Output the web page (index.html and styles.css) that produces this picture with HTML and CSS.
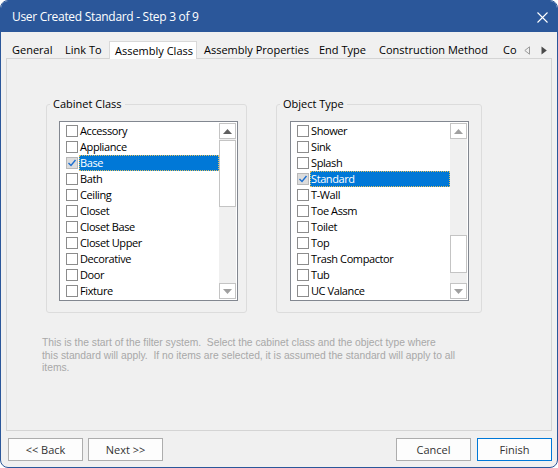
FILE: index.html
```html
<!DOCTYPE html>
<html>
<head>
<meta charset="utf-8">
<link rel="stylesheet" href="styles.css">
</head>
<body>
<div class="window">
  <div class="titlebar">
    <span class="title">User Created Standard - Step 3 of 9</span>
    <svg class="close" width="11" height="11" viewBox="0 0 11 11"><path d="M0.5 0.5 L10.5 10.5 M10.5 0.5 L0.5 10.5" stroke="#fff" stroke-width="1.1" fill="none"/></svg>
  </div>
  <div class="body">
    <div class="tabs">
      <span class="tab t-general">General</span>
      <span class="tab t-link">Link To</span>
      <span class="tab t-class active">Assembly Class</span>
      <span class="tab t-props">Assembly Properties</span>
      <span class="tab t-end">End Type</span>
      <span class="tab t-cons">Construction Method</span>
      <span class="tab t-co">Co</span>
      <span class="tab-arrows">
        <svg width="6" height="9" viewBox="0 0 6 9"><path d="M5.5 0.8 L0.8 4.5 L5.5 8.2 Z" fill="none" stroke="#9a9a9a" stroke-width="1"/></svg>
        <svg width="6" height="9" viewBox="0 0 6 9"><path d="M0.5 0.5 L5.8 4.5 L0.5 8.5 Z" fill="#4a4a4a"/></svg>
      </span>
    </div>
    <div class="panel">
      <div class="groups">
        <fieldset class="group group-left">
          <legend>Cabinet Class</legend>
          <div class="listbox">
            <div class="items">
              <div class="row"><span class="cb"></span><span class="lbl">Accessory</span></div>
              <div class="row"><span class="cb"></span><span class="lbl">Appliance</span></div>
              <div class="row"><span class="cb checked"><svg width="10" height="10" viewBox="0 0 10 10"><path d="M1.5 5 L4 7.5 L8.5 2" stroke="#1c6fd0" stroke-width="1.4" fill="none"/></svg></span><span class="lbl selected">Base</span></div>
              <div class="row"><span class="cb"></span><span class="lbl">Bath</span></div>
              <div class="row"><span class="cb"></span><span class="lbl">Ceiling</span></div>
              <div class="row"><span class="cb"></span><span class="lbl">Closet</span></div>
              <div class="row"><span class="cb"></span><span class="lbl">Closet Base</span></div>
              <div class="row"><span class="cb"></span><span class="lbl">Closet Upper</span></div>
              <div class="row"><span class="cb"></span><span class="lbl">Decorative</span></div>
              <div class="row"><span class="cb"></span><span class="lbl">Door</span></div>
              <div class="row"><span class="cb"></span><span class="lbl">Fixture</span></div>
            </div>
            <div class="scrollbar">
              <div class="sbtn"><svg width="9" height="5" viewBox="0 0 9 5"><path d="M0 5 L4.5 0 L9 5 Z" fill="#606060"/></svg></div>
              <div class="track track-left"><div class="thumb"></div></div>
              <div class="sbtn"><svg width="9" height="5" viewBox="0 0 9 5"><path d="M0 0 L4.5 5 L9 0 Z" fill="#a0a0a0"/></svg></div>
            </div>
          </div>
        </fieldset>
        <fieldset class="group group-right">
          <legend>Object Type</legend>
          <div class="listbox">
            <div class="items">
              <div class="row"><span class="cb"></span><span class="lbl">Shower</span></div>
              <div class="row"><span class="cb"></span><span class="lbl">Sink</span></div>
              <div class="row"><span class="cb"></span><span class="lbl">Splash</span></div>
              <div class="row"><span class="cb checked"><svg width="10" height="10" viewBox="0 0 10 10"><path d="M1.5 5 L4 7.5 L8.5 2" stroke="#1c6fd0" stroke-width="1.4" fill="none"/></svg></span><span class="lbl selected">Standard</span></div>
              <div class="row"><span class="cb"></span><span class="lbl">T-Wall</span></div>
              <div class="row"><span class="cb"></span><span class="lbl">Toe Assm</span></div>
              <div class="row"><span class="cb"></span><span class="lbl">Toilet</span></div>
              <div class="row"><span class="cb"></span><span class="lbl">Top</span></div>
              <div class="row"><span class="cb"></span><span class="lbl">Trash Compactor</span></div>
              <div class="row"><span class="cb"></span><span class="lbl">Tub</span></div>
              <div class="row"><span class="cb"></span><span class="lbl">UC Valance</span></div>
            </div>
            <div class="scrollbar">
              <div class="sbtn"><svg width="9" height="5" viewBox="0 0 9 5"><path d="M0 5 L4.5 0 L9 5 Z" fill="#a0a0a0"/></svg></div>
              <div class="track track-right"><div class="thumb"></div></div>
              <div class="sbtn"><svg width="9" height="5" viewBox="0 0 9 5"><path d="M0 0 L4.5 5 L9 0 Z" fill="#a0a0a0"/></svg></div>
            </div>
          </div>
        </fieldset>
      </div>
      <p class="desc">This is the start of the filter system.&nbsp; Select the cabinet class and the object type where<br>this standard will apply.&nbsp; If no items are selected, it is assumed the standard will apply to all<br>items.</p>
    </div>
    <div class="buttons">
      <div class="btn-group">
        <button class="btn">&lt;&lt; Back</button>
        <button class="btn">Next &gt;&gt;</button>
      </div>
      <div class="btn-group right">
        <button class="btn">Cancel</button>
        <button class="btn primary">Finish</button>
      </div>
    </div>
  </div>
</div>
</body>
</html>
```
FILE: styles.css
```css
* { box-sizing: border-box; }
html, body { margin: 0; padding: 0; background: #ffffff; }
body { width: 558px; height: 468px; font-family: "Open Sans", "Noto Sans", sans-serif; font-size: 11px; color: #000; }

.window {
  width: 558px; height: 468px;
  border: 1px solid #2b579a;
  border-radius: 8px;
  overflow: hidden;
  background: #f0f0f0;
  display: flex; flex-direction: column;
}
.titlebar {
  height: 31px; flex: none;
  background: #2b579a;
  display: flex; align-items: center; justify-content: space-between;
  padding: 0 9px 0 11px;
}
.title { color: #fff; font-size: 12px; line-height: 16px; letter-spacing: -0.3px; }
.close { display: block; margin-top: 1px; }

.body { flex: 1; padding: 0 5px; display: flex; flex-direction: column; }

.tabs {
  margin-top: 9px; height: 17px;
  display: flex; align-items: stretch;
  position: relative; z-index: 1;
}
.tab { line-height: 17px; white-space: nowrap; color: #000; }
.t-general { margin-left: 6px; width: 53px; }
.t-link { width: 44px; }
.t-class { width: 88px; }
.t-props { margin-left: 7px; width: 115px; }
.t-end { width: 60px; }
.t-cons { width: 124px; }
.t-co { width: 20px; }
.tab.active {
  background: #fff;
  border: 1px solid #d9d9d9; border-bottom: none;
  height: 18px; padding-left: 5px;
  line-height: 18px;
}
.tab-arrows { display: flex; align-items: center; gap: 11px; margin-left: 1px; padding-top: 1px; }
.tab-arrows svg { display: block; }

.panel {
  height: 373px; flex: none;
  border: 1px solid #d4d4d4;
  background: #f0f0f0;
  display: flex; flex-direction: column;
}
.groups { display: flex; margin-top: 38px; margin-left: 39px; }
.group {
  margin: 0; padding: 0 0 11px 12px;
  border: 1px solid #dcdcdc; border-radius: 3px;
  height: 216px;
}
.group-left { width: 201px; }
.group-left legend { margin-left: -9px; }
.group-right { width: 206px; margin-left: 29px; padding-left: 13px; }
.group-right legend { margin-left: -10px; }
legend { padding: 0 3px; line-height: 14px; color: #000; }

.listbox {
  margin-top: 10px;
  width: 179px; height: 180px;
  border: 1px solid #828790;
  background: #fff;
  padding: 1px;
  display: flex;
}
.items { width: 158px; }
.row { height: 16px; display: flex; align-items: center; padding-left: 5px; }
.cb {
  width: 12px; height: 12px; flex: none;
  border: 1px solid #8c8c8c; background: #fff;
  margin-right: 1px;
  display: flex; align-items: center; justify-content: center;
}
.cb.checked { background: #dcdcdc; border-color: #b8b8b8; }
.cb svg { display: block; }
.lbl { flex: 1; height: 16px; line-height: 16px; padding-left: 1px; white-space: nowrap; letter-spacing: -0.4px; }
.lbl.selected {
  background: #0078d7; color: #fff;
  outline: 1px dotted #e0c060; outline-offset: -1px;
}

.scrollbar { width: 17px; background: #f0f0f0; display: flex; flex-direction: column; }
.sbtn {
  height: 16px; flex: none;
  background: #fff; border: 1px solid #c4c4c4;
  display: flex; align-items: center; justify-content: center;
}
.sbtn svg { display: block; }
.track { flex: 1; display: flex; flex-direction: column; }
.thumb { background: #fff; border: 1px solid #c4c4c4; }
.track-left .thumb { margin-top: 1px; height: 67px; }
.track-right .thumb { margin-top: 96px; height: 38px; }

.desc {
  margin: 24px 0 0 35px;
  font-family: "Liberation Sans", sans-serif;
  font-size: 10.3px; line-height: 12.5px;
  color: #a8a8a8;
}

.buttons { margin-top: 7px; display: flex; justify-content: space-between; padding-left: 2px; }
.btn-group { display: flex; gap: 5px; }
.btn-group.right { gap: 6px; }
.btn {
  width: 75px; height: 23px;
  font-family: "Open Sans", "Noto Sans", sans-serif; font-size: 11px;
  background: #fdfdfd; color: #333;
  border: 1px solid #adadad; border-radius: 0;
  padding: 0;
}
.btn.primary { border-color: #0078d7; }
```
